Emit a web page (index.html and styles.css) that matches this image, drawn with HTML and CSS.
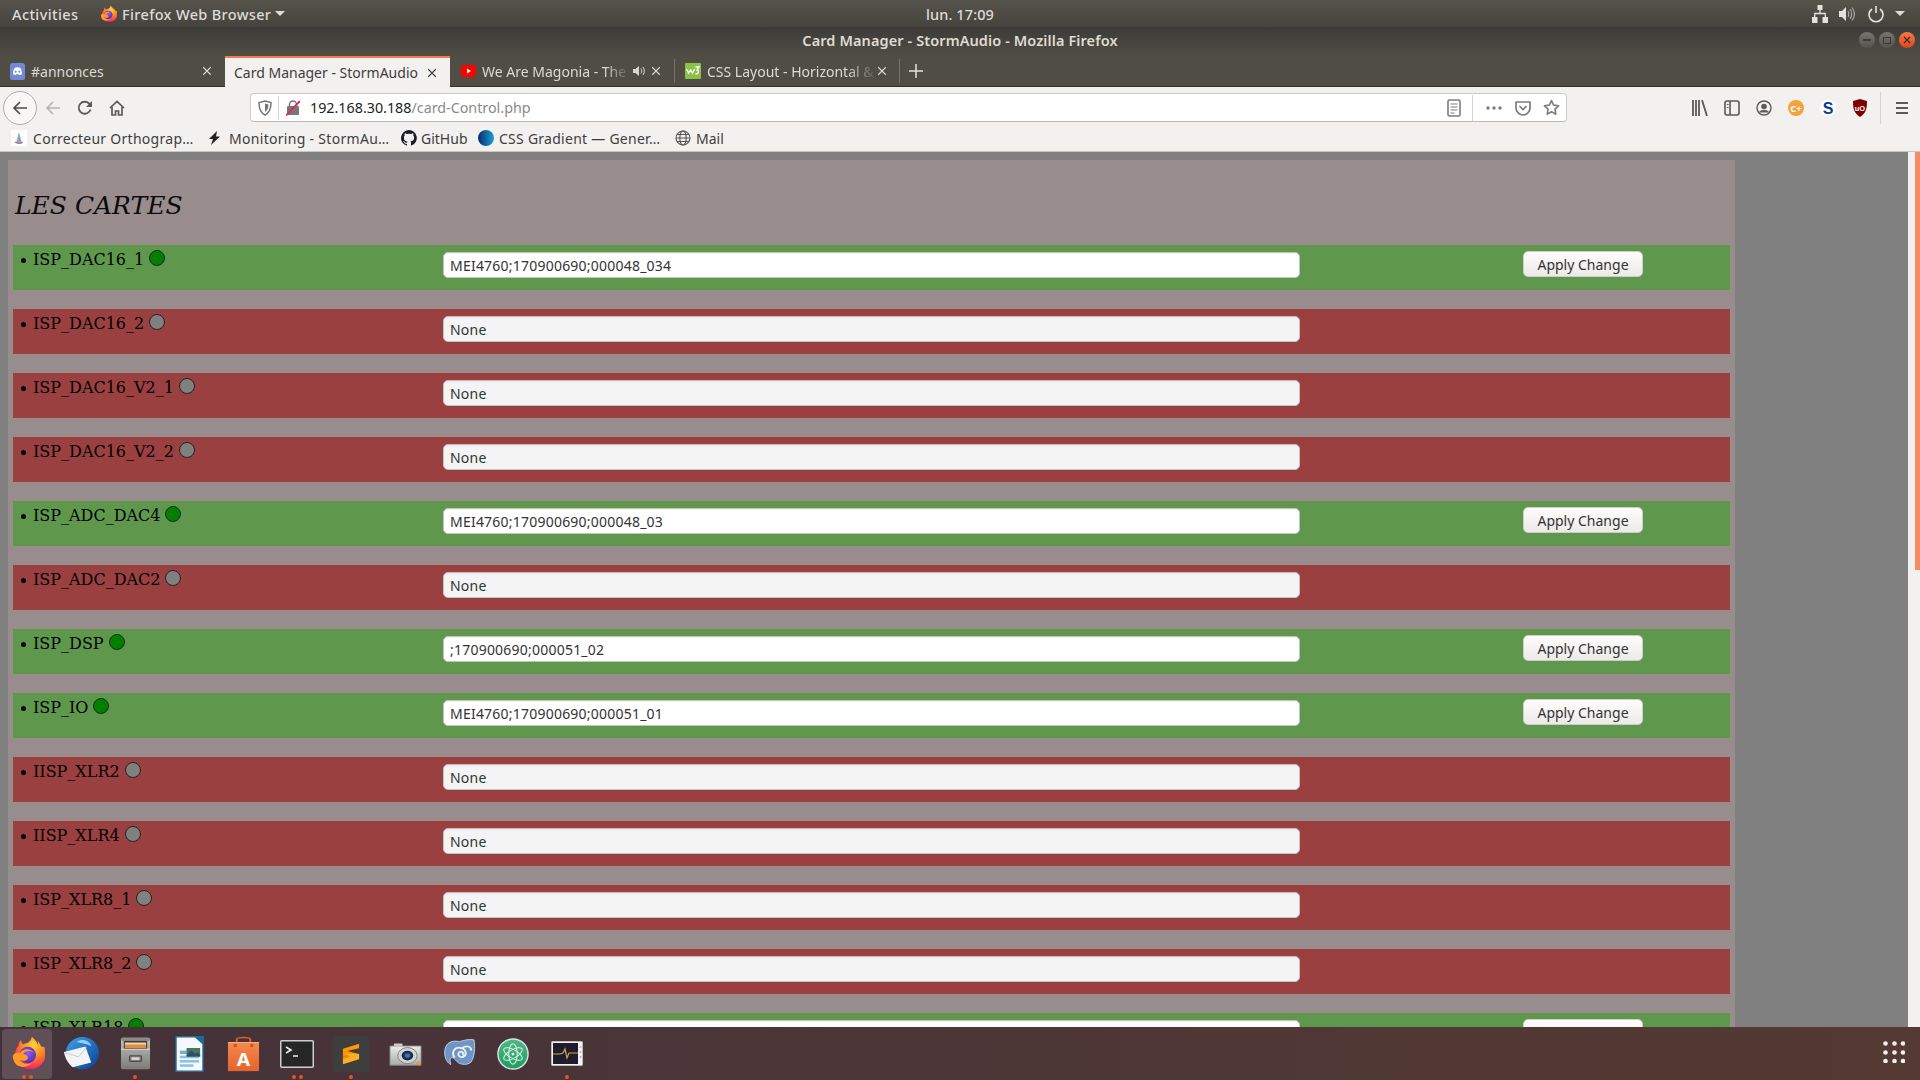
FILE: index.html
```html
<!DOCTYPE html>
<html lang="fr">
<head>
<meta charset="utf-8">
<title>Card Manager - StormAudio</title>
<link rel="stylesheet" href="styles.css">
</head>
<body>
<svg class="defs" width="0" height="0">
  <defs>
    <radialGradient id="ffBody" cx="60%" cy="25%" r="80%"><stop offset="0" stop-color="#ffd43a"/><stop offset=".45" stop-color="#ff8a1f"/><stop offset=".8" stop-color="#ff3a4e"/><stop offset="1" stop-color="#e31587"/></radialGradient>
    <radialGradient id="ffGlobe" cx="50%" cy="40%" r="65%"><stop offset="0" stop-color="#9059ff"/><stop offset="1" stop-color="#4a2ba8"/></radialGradient>
    <linearGradient id="tbWing" x1="0" y1="0" x2="1" y2="1"><stop offset="0" stop-color="#3fa4ee"/><stop offset="1" stop-color="#0a3d91"/></linearGradient>
    <linearGradient id="drawer" x1="0" y1="0" x2="0" y2="1"><stop offset="0" stop-color="#c2c0bb"/><stop offset="1" stop-color="#7e7c78"/></linearGradient>
    <linearGradient id="bag" x1="0" y1="0" x2="0" y2="1"><stop offset="0" stop-color="#f58a4d"/><stop offset="1" stop-color="#e4632c"/></linearGradient>
    <linearGradient id="atomG" x1="0" y1="0" x2="0" y2="1"><stop offset="0" stop-color="#52b788"/><stop offset="1" stop-color="#1f9a62"/></linearGradient>
    <linearGradient id="camG" x1="0" y1="0" x2="0" y2="1"><stop offset="0" stop-color="#ececec"/><stop offset="1" stop-color="#aaa"/></linearGradient>
    <linearGradient id="cssG" x1="0" y1="0" x2="1" y2="0"><stop offset="0" stop-color="#0a2a6b"/><stop offset="1" stop-color="#1aa1d8"/></linearGradient>
    <symbol id="firefox" viewBox="0 0 48 48">
      <path d="M43 15c-1-3-3-6-5-8 1 3 1 5 1 6-2-5-5-8-8-11 0 0-1 0-1 1 0 3-3 5-5 7-3 0-5 1-6 2-1-1-3-3-3-6-2 2-3 4-3 7-3 3-5 8-5 12 0 11 9 20 20 20s21-9 21-21c0-3-1-6-2-9z" fill="url(#ffBody)"/>
      <circle cx="25" cy="26" r="11" fill="url(#ffGlobe)"/>
      <path d="M5 27c2-4 7-5 10-4 2-4 8-6 13-4 5 2 7 7 7 7-2-4-6-6-10-5-3 0-6 2-6 4 4 0 7 3 6 6-2 4-8 3-11 1 3 6 11 8 17 4-4 6-14 8-21 3-3-3-5-7-5-12z" fill="#ff9a2a"/>
    </symbol>
    <symbol id="star" viewBox="0 0 16 16"><path d="M8 1.500l2 4.300 4.700.6-3.500 3.200.9 4.700L8 11.900 3.900 14.300l.9-4.700L1.300 6.400 6 5.800z" fill="none" stroke="currentColor" stroke-width="1.500" stroke-linejoin="round"/></symbol>
    <symbol id="close" viewBox="0 0 12 12"><path d="M1.500 1.500l9 9M10.500 1.500l-9 9" stroke="currentColor" stroke-width="1.300" fill="none"/></symbol>
  </defs>
</svg>

<div class="desktop">
  <header class="topbar">
    <div class="topbar-left">
      <span class="activities">Activities</span>
      <svg class="ff-mini" width="18" height="20"><use href="#firefox"/></svg>
      <span class="appname">Firefox Web Browser</span>
      <span class="caret"></span>
    </div>
    <div class="clock">lun. 17:09</div>
    <div class="tray">
      <svg width="16" height="18" viewBox="0 0 16 18"><path d="M5.500 0h5v5h-5zM0 12h5.500v6H0zM10.500 12H16v6h-5.500z" fill="#e4e2dd"/><path d="M8 5v3.500M2.750 12V8.500h10.500V12" stroke="#e4e2dd" stroke-width="1.300" fill="none"/></svg>
      <svg class="tray-vol" width="16" height="16" viewBox="0 0 16 16"><path d="M0 5h3l4-4v14l-4-4H0z" fill="#e4e2dd"/><path d="M9 5c1 2 1 4 0 6M11 3c2 3 2 7 0 10M13 1.500c3 4 3 9 0 13" stroke="#a8a69f" stroke-width="1.200" fill="none"/></svg>
      <svg class="tray-pow" width="16" height="18" viewBox="0 0 16 18"><path d="M8 1v7" stroke="#e4e2dd" stroke-width="1.600"/><path d="M4 4a7 7 0 1 0 8 0" stroke="#e4e2dd" stroke-width="1.600" fill="none"/></svg>
      <span class="caret"></span>
    </div>
  </header>

  <div class="titlebar">
    <div class="title">Card Manager - StormAudio - Mozilla Firefox</div>
    <div class="winbtns">
      <span class="winbtn"><i class="win-min"></i></span>
      <span class="winbtn"><i class="win-max"></i></span>
      <span class="winbtn winbtn-close"><svg width="8" height="8" viewBox="0 0 8 8"><path d="M1 1l6 6M7 1L1 7" stroke="#4a2012" stroke-width="1.100"/></svg></span>
    </div>
  </div>

  <nav class="tabbar">
    <div class="tab tab-first">
      <svg class="fav" width="15" height="17" viewBox="0 0 15 17"><rect width="15" height="17" rx="2.500" fill="#7289da"/><path d="M3 11c0-3 1-5 1.500-6 1-.5 2-.7 3-.7s2 .2 3 .7c.5 1 1.500 3 1.500 6-1 .8-2 1.200-2.500 1.200l-.7-1H6.200l-.7 1C5 12.200 4 11.800 3 11z" fill="#fff"/><circle cx="5.700" cy="8.800" r="1" fill="#7289da"/><circle cx="9.300" cy="8.800" r="1" fill="#7289da"/></svg>
      <span class="tab-text">#annonces</span>
      <svg class="tab-close" width="10" height="10"><use href="#close"/></svg>
    </div>
    <div class="tab tab-active">
      <span class="tab-text">Card Manager - StormAudio</span>
      <svg class="tab-close" width="10" height="10"><use href="#close"/></svg>
    </div>
    <div class="tab tab-yt">
      <svg class="fav" width="15" height="12" viewBox="0 0 15 12"><rect width="15" height="12" rx="3" fill="#f00"/><path d="M6 3.500l4 2.500-4 2.500z" fill="#fff"/></svg>
      <span class="tab-text tab-fade">We Are Magonia - The Hit</span>
      <svg class="tab-audio" width="14" height="12" viewBox="0 0 14 12"><path d="M0 4h2.500L6 1v10L2.500 8H0z" fill="#d8d6d0"/><path d="M8 3.500c1 1.500 1 3.500 0 5M10 2c1.800 2.500 1.800 5.500 0 8" stroke="#d8d6d0" fill="none"/></svg>
      <svg class="tab-close" width="10" height="10"><use href="#close"/></svg>
    </div>
    <div class="tab tab-w3">
      <svg class="fav" width="16" height="16" viewBox="0 0 16 16"><rect width="16" height="16" rx="1" fill="#8ac249"/><path d="M1.500 6l2 4 2-3 2 3 2-4" stroke="#fff" stroke-width="1.300" fill="none"/><path d="M10.500 4h3.500l-2 3c2 0 2.500 4-1.500 4" stroke="#fff" stroke-width="1.300" fill="none"/></svg>
      <span class="tab-text tab-fade">CSS Layout - Horizontal &amp; Vertical</span>
      <svg class="tab-close" width="10" height="10"><use href="#close"/></svg>
    </div>
    <svg class="tab-plus" width="14" height="14" viewBox="0 0 14 14"><path d="M7 0v14M0 7h14" stroke="#e4e2dd" stroke-width="1.500"/></svg>
  </nav>

  <div class="navbar">
    <div class="nav-left">
      <span class="back-btn"><svg width="16" height="16" viewBox="0 0 16 16"><path d="M15 8H2M8 2L2 8l6 6" fill="none" stroke="#4a4a4a" stroke-width="1.600"/></svg></span>
      <svg class="nav-ico" width="16" height="16" viewBox="0 0 16 16"><path d="M15 8H2M8 2L2 8l6 6" fill="none" stroke="#b4b4b3" stroke-width="1.600"/></svg>
      <svg class="nav-ico" width="16" height="16" viewBox="0 0 16 16"><path d="M13.500 9.500A6 6 0 1 1 12 3.500l2 2" fill="none" stroke="#5a5a5a" stroke-width="1.800"/><path d="M15 1v6H9z" fill="#5a5a5a"/></svg>
      <svg class="nav-ico" width="16" height="16" viewBox="0 0 16 16"><path d="M1 8l7-6.500L15 8M3 7v8h3.500v-4h3v4H13V7" fill="none" stroke="#5a5a5a" stroke-width="1.700"/></svg>
    </div>
    <div class="urlbar">
      <svg class="url-shield" width="14" height="16" viewBox="0 0 14 16"><path d="M7 1l6 1.500c0 6-1 10-6 12.500C2 12.500 1 8.500 1 2.500z" fill="none" stroke="#777" stroke-width="1.500"/><path d="M7 3.500l3.500 1c0 3-.7 6-3.500 7.500z" fill="#777"/></svg>
      <span class="url-sep"></span>
      <svg class="url-lock" width="14" height="16" viewBox="0 0 14 16"><rect x="1" y="6" width="12" height="9" rx="1" fill="#777"/><path d="M3.500 6V4.500a3.500 3.500 0 0 1 7 0V6" fill="none" stroke="#777" stroke-width="1.500"/><path d="M0 15.500L14 1" stroke="#e22850" stroke-width="1.800"/></svg>
      <span class="url-text"><span class="url-host">192.168.30.188</span>/card-Control.php</span>
      <span class="url-actions">
        <svg width="14" height="18" viewBox="0 0 14 18"><rect x="1" y="1" width="12" height="16" rx="1.500" fill="none" stroke="#7c7c7c" stroke-width="1.600"/><path d="M3.500 5h7M3.500 8h7M3.500 11h7M3.500 14h4" stroke="#7c7c7c"/></svg>
        <span class="url-sep url-sep-tall"></span>
        <svg class="ua-dots" width="16" height="4" viewBox="0 0 16 4"><circle cx="2" cy="2" r="1.700" fill="#7c7c7c"/><circle cx="8" cy="2" r="1.700" fill="#7c7c7c"/><circle cx="14" cy="2" r="1.700" fill="#7c7c7c"/></svg>
        <svg class="ua-pocket" width="16" height="16" viewBox="0 0 16 16"><path d="M1 2h14v6a7 7 0 0 1-14 0z" fill="none" stroke="#7c7c7c" stroke-width="1.700" stroke-linejoin="round"/><path d="M4.500 6L8 9.500 11.500 6" fill="none" stroke="#7c7c7c" stroke-width="1.700"/></svg>
        <svg class="ua-star" width="17" height="17" color="#7c7c7c"><use href="#star"/></svg>
      </span>
    </div>
    <div class="toolbar">
      <svg width="16" height="16" viewBox="0 0 16 16"><path d="M1 0v16M4 0v16M7 0v16M10 0l5 16" stroke="#5a5a5a" stroke-width="1.800" fill="none"/></svg>
      <svg width="16" height="16" viewBox="0 0 16 16"><rect x="1" y="1" width="14" height="14" rx="2" fill="none" stroke="#5a5a5a" stroke-width="1.600"/><path d="M6 1v14" stroke="#5a5a5a" stroke-width="1.600"/><path d="M2.800 4.500h1.800M2.800 7.500h1.800" stroke="#5a5a5a"/></svg>
      <svg width="16" height="16" viewBox="0 0 16 16"><circle cx="8" cy="8" r="7" fill="none" stroke="#5a5a5a" stroke-width="1.400"/><circle cx="8" cy="6.500" r="2.800" fill="#5a5a5a"/><path d="M3.200 12.500c1-2.800 8.600-2.800 9.600 0" fill="#5a5a5a" stroke="#5a5a5a"/></svg>
      <svg width="16" height="16" viewBox="0 0 16 16"><circle cx="8" cy="8" r="8" fill="#f2a33c"/><text x="8" y="11.500" class="ext-text" fill="#fff">C+</text></svg>
      <svg width="16" height="16" viewBox="0 0 16 16"><circle cx="8" cy="8" r="8" fill="#fff"/><text x="8" y="13.500" class="ext-s" fill="#0b3e8f">S</text></svg>
      <svg width="16" height="18" viewBox="0 0 16 18"><path d="M8 0l7 2c0 8-1 12-7 16C2 14 1 10 1 2z" fill="#800000"/><text x="8" y="11.500" class="ext-u" fill="#fff">uO</text></svg>
      <span class="tool-sep"></span>
      <svg class="menu-ico" width="14" height="14" viewBox="0 0 14 14"><path d="M1 2h12M1 7h12M1 12h12" stroke="#5a5a5a" stroke-width="1.900"/></svg>
    </div>
  </div>

  <div class="bookmarks">
    <span class="bm bm-1"><svg width="16" height="16" viewBox="0 0 16 16"><rect width="16" height="16" fill="#fff"/><path d="M8 2L5 13h6z" fill="#8aa6c4"/><path d="M4 12c3 2 6 2 8 0" stroke="#d04040" fill="none"/></svg>Correcteur Orthograp…</span>
    <span class="bm bm-2"><svg width="14" height="14" viewBox="0 0 14 14"><path d="M9 0L1 8h4l-2 6 9-8.500H8z" fill="#222"/></svg>Monitoring - StormAu…</span>
    <span class="bm bm-3"><svg width="16" height="16" viewBox="0 0 16 16"><path d="M8 0a8 8 0 0 0-2.500 15.600c.4.100.5-.2.500-.4v-1.400c-2.200.5-2.700-1-2.700-1-.4-.9-.9-1.200-.9-1.200-.7-.5.100-.5.100-.5.800.100 1.200.8 1.200.8.700 1.200 1.900.9 2.300.7.100-.5.300-.9.500-1.100-1.800-.2-3.600-.9-3.600-4 0-.9.300-1.600.8-2.100-.1-.2-.4-1 .1-2.100 0 0 .7-.2 2.200.8a7.600 7.600 0 0 1 4 0c1.500-1 2.200-.8 2.200-.8.400 1.100.2 1.900.1 2.100.5.600.8 1.300.8 2.100 0 3.100-1.900 3.700-3.600 3.900.3.200.5.700.5 1.500v2.200c0 .2.100.5.600.4A8 8 0 0 0 8 0z" fill="#1b1f23"/></svg>GitHub</span>
    <span class="bm bm-4"><svg width="16" height="16" viewBox="0 0 16 16"><circle cx="8" cy="8" r="8" fill="url(#cssG)"/></svg>CSS Gradient — Gener…</span>
    <span class="bm bm-5"><svg width="16" height="16" viewBox="0 0 16 16"><g fill="none" stroke="#555" stroke-width="1.100"><circle cx="8" cy="8" r="7"/><ellipse cx="8" cy="8" rx="3.200" ry="7"/><path d="M1 8h14M2 4.500h12M2 11.500h12"/></g></svg>Mail</span>
  </div>

  <div class="viewport">
    <main class="page">
      <section class="panel">
        <h1 class="panel-title">LES CARTES</h1>
        <ul class="cards">
          <li class="card card-ok"><div class="card-label"><span class="bullet"></span>ISP_DAC16_1<span class="led led-on"></span></div><input class="card-input" value="MEI4760;170900690;000048_034"><button class="apply">Apply Change</button></li>
          <li class="card card-ko"><div class="card-label"><span class="bullet"></span>ISP_DAC16_2<span class="led"></span></div><input class="card-input" value="None"></li>
          <li class="card card-ko"><div class="card-label"><span class="bullet"></span>ISP_DAC16_V2_1<span class="led"></span></div><input class="card-input" value="None"></li>
          <li class="card card-ko"><div class="card-label"><span class="bullet"></span>ISP_DAC16_V2_2<span class="led"></span></div><input class="card-input" value="None"></li>
          <li class="card card-ok"><div class="card-label"><span class="bullet"></span>ISP_ADC_DAC4<span class="led led-on"></span></div><input class="card-input" value="MEI4760;170900690;000048_03"><button class="apply">Apply Change</button></li>
          <li class="card card-ko"><div class="card-label"><span class="bullet"></span>ISP_ADC_DAC2<span class="led"></span></div><input class="card-input" value="None"></li>
          <li class="card card-ok"><div class="card-label"><span class="bullet"></span>ISP_DSP<span class="led led-on"></span></div><input class="card-input" value=";170900690;000051_02"><button class="apply">Apply Change</button></li>
          <li class="card card-ok"><div class="card-label"><span class="bullet"></span>ISP_IO<span class="led led-on"></span></div><input class="card-input" value="MEI4760;170900690;000051_01"><button class="apply">Apply Change</button></li>
          <li class="card card-ko"><div class="card-label"><span class="bullet"></span>IISP_XLR2<span class="led"></span></div><input class="card-input" value="None"></li>
          <li class="card card-ko"><div class="card-label"><span class="bullet"></span>IISP_XLR4<span class="led"></span></div><input class="card-input" value="None"></li>
          <li class="card card-ko"><div class="card-label"><span class="bullet"></span>ISP_XLR8_1<span class="led"></span></div><input class="card-input" value="None"></li>
          <li class="card card-ko"><div class="card-label"><span class="bullet"></span>ISP_XLR8_2<span class="led"></span></div><input class="card-input" value="None"></li>
          <li class="card card-ok"><div class="card-label"><span class="bullet"></span>ISP_XLR18<span class="led led-on"></span></div><input class="card-input" value=""><button class="apply">Apply Change</button></li>
        </ul>
      </section>
    </main>
    <div class="scrollbar"><div class="scroll-thumb"></div></div>
  </div>

  <footer class="dock">
    <div class="dock-apps">
      <div class="dock-item dock-active">
        <svg width="36" height="37"><use href="#firefox"/></svg>
        <div class="pips"><i></i><i></i></div>
      </div>
      <div class="dock-item">
        <svg width="37" height="36" viewBox="0 0 38 38" preserveAspectRatio="none"><circle cx="20" cy="18" r="17" fill="url(#tbWing)"/><path d="M14 6c6-4 14-1 15 5-4-3-10-3-15-5z" fill="#8cd0f7"/><path d="M1 17l22-6 6 17-19 5C6 30 2 24 1 17z" fill="#f4f4f4"/><path d="M3 18l13 4 8-10" fill="none" stroke="#c2c8d2"/></svg>
        <div class="pips"></div>
      </div>
      <div class="dock-item">
        <svg width="31" height="33" viewBox="0 0 32 42" preserveAspectRatio="none"><rect x="1" y="1" width="30" height="40" rx="2" fill="url(#drawer)"/><rect x="1" y="1" width="30" height="4" rx="2" fill="#8c8a86"/><rect x="4" y="5" width="24" height="10" fill="#3d3a36"/><rect x="5" y="7" width="22" height="3" fill="#f5d3a9"/><rect x="5" y="10" width="22" height="4" fill="#e98a3c"/><rect x="1" y="15" width="30" height="1" fill="#eee"/><rect x="10" y="24" width="12" height="7" rx="1" fill="none" stroke="#4c4c4a" stroke-width="1.500"/><rect x="12" y="26" width="8" height="3" fill="#ddd"/></svg>
        <div class="pips pips-one"><i></i></div>
      </div>
      <div class="dock-item">
        <svg width="29" height="36" viewBox="0 0 30 42" preserveAspectRatio="none"><path d="M1 1h20l8 8v32H1z" fill="#f6f8fb" stroke="#1b6a9c" stroke-width="1.500"/><path d="M20 0h10v10z" fill="#1b6a9c"/><rect x="5" y="17" width="14" height="4" fill="#6fb2dc"/><rect x="5" y="23" width="20" height="3" fill="#8cc2e2"/><rect x="5" y="28" width="20" height="3" fill="#8cc2e2"/><rect x="5" y="33" width="14" height="3" fill="#8cc2e2"/><rect x="12" y="14" width="14" height="10" fill="#47785e"/><path d="M12 22l5-5 4 4 2-2 3 3v2H12z" fill="#2f4e6d"/></svg>
        <div class="pips"></div>
      </div>
      <div class="dock-item">
        <svg width="33" height="36" viewBox="0 0 34 42" preserveAspectRatio="none"><path d="M10 8V4c0-3 14-3 14 0v4" fill="none" stroke="#d8622b" stroke-width="2"/><rect x="1" y="7" width="32" height="34" fill="url(#bag)"/><rect x="1" y="7" width="32" height="1" fill="#fbb088"/><rect x="7" y="9" width="3" height="4" rx="1" fill="#c85222"/><rect x="24" y="9" width="3" height="4" rx="1" fill="#c85222"/><text x="17" y="35" class="dock-a" fill="#fff">A</text></svg>
        <div class="pips"></div>
      </div>
      <div class="dock-item">
        <svg width="34" height="28" viewBox="0 0 34 28"><rect x=".75" y=".75" width="32.500" height="26.500" rx="1" fill="#262626" stroke="#cfcfcf" stroke-width="1.500"/><path d="M6 7l5 3-5 3" fill="none" stroke="#eee" stroke-width="1.600"/><path d="M13 16h5" stroke="#eee" stroke-width="1.500"/></svg>
        <div class="pips pips-two"><i></i><i></i></div>
      </div>
      <div class="dock-item">
        <span class="sublime-tile"><svg width="18" height="22" viewBox="0 0 24 30"><path d="M23 1L1 8v7l22 7v-7L7 11l16-4z" fill="#ff9800"/><path d="M1 15v14l22-7v-7z" fill="#ffb020"/><path d="M1 15l10 3L1 22z" fill="#e8890a"/></svg></span>
        <div class="pips pips-one"><i></i></div>
      </div>
      <div class="dock-item">
        <svg width="33" height="24" viewBox="0 0 34 30" preserveAspectRatio="none"><path d="M1 5h32v24H1z" fill="url(#camG)" stroke="#888"/><rect x="5" y="2" width="9" height="3" rx="1" fill="#ccc"/><circle cx="19" cy="17" r="10" fill="#d4d4d4" stroke="#777"/><circle cx="19" cy="17" r="6" fill="#1d2c4c"/><circle cx="19" cy="17" r="3" fill="#3d6bb5"/><rect x="28" y="25" width="4" height="3" fill="#e89a2a"/></svg>
        <div class="pips"></div>
      </div>
      <div class="dock-item">
        <svg width="33" height="30" viewBox="0 0 34 34" preserveAspectRatio="none"><path d="M2 12C3 4 10 1 17 3c5-2 11-3 15-2 1 8 1 18-3 25-4 4-10 3-13 1-3-2-4-6-7-6-3 2-1 5-1 8-5-3-7-10-6-17z" fill="#6f95c5" stroke="#c0d4ea"/><path d="M12 21c-4-6 0-12 6-11s7 8 3 10-7-3-4-5 5 2 3 3" fill="none" stroke="#eaf1f9" stroke-width="2"/><path d="M20 10c4-3 9-2 9 3" fill="none" stroke="#eaf1f9" stroke-width="2"/></svg>
        <div class="pips"></div>
      </div>
      <div class="dock-item">
        <svg width="32" height="32" viewBox="0 0 34 34"><circle cx="17" cy="17" r="16" fill="url(#atomG)" stroke="#d8e8df" stroke-width="1.500"/><g fill="none" stroke="#d8f2e3" stroke-width="1.100"><ellipse cx="17" cy="17" rx="11" ry="4.500" transform="rotate(30 17 17)"/><ellipse cx="17" cy="17" rx="11" ry="4.500" transform="rotate(-30 17 17)"/><ellipse cx="17" cy="17" rx="11" ry="4.500" transform="rotate(90 17 17)"/></g><circle cx="17" cy="17" r="1.600" fill="#d8f2e3"/></svg>
        <div class="pips"></div>
      </div>
      <div class="dock-item">
        <svg width="32" height="25" viewBox="0 0 32 25"><rect x=".5" y=".5" width="31" height="24" rx="1" fill="#f2f2f0" stroke="#bbb"/><rect x="2" y="2" width="25" height="21" fill="#1f1d2b"/><path d="M2 13h7l3-1 2-4 2 9 2-5h9" fill="none" stroke="#c7a84c" stroke-width="1.200"/><g fill="#b5b5b3"><circle cx="29.500" cy="6" r="1"/><circle cx="29.500" cy="11" r="1"/><circle cx="29.500" cy="16" r="1"/></g></svg>
        <div class="pips pips-one"><i></i></div>
      </div>
    </div>
    <svg class="show-apps" width="22" height="22" viewBox="0 0 22 22"><g fill="#f2f0f0"><circle cx="2.500" cy="2.500" r="2.300"/><circle cx="11.500" cy="2.500" r="2.300"/><circle cx="20" cy="2.500" r="2.300"/><circle cx="2.500" cy="11.500" r="2.300"/><circle cx="11.500" cy="11.500" r="2.300"/><circle cx="20" cy="11.500" r="2.300"/><circle cx="2.500" cy="20" r="2.300"/><circle cx="11.500" cy="20" r="2.300"/><circle cx="20" cy="20" r="2.300"/></g></svg>
  </footer>
</div>
</body>
</html>
```
FILE: styles.css
```css
* { box-sizing: border-box; }
html, body { margin: 0; padding: 0; height: 100%; overflow: hidden; }
body { font-family: "Noto Sans", "Liberation Sans", sans-serif; }
.defs { position: absolute; }
.desktop { display: flex; flex-direction: column; width: 1920px; height: 1080px; }

/* GNOME top bar */
.topbar { height: 27px; flex: none; display: grid; grid-template-columns: 1fr auto 1fr; align-items: center; background: linear-gradient(#57544c, #44433d); color: #dedcd6; font-size: 14.500px; }
.topbar-left { display: flex; align-items: center; padding-left: 12px; }
.activities { width: 87px; letter-spacing: .4px; font-weight: 500; }
.ff-mini { margin-right: 5px; }
.appname { font-weight: 500; letter-spacing: .35px; width: 153px; white-space: nowrap; }
.caret { display: inline-block; width: 0; height: 0; border: 5px solid transparent; border-top: 5px solid #dedcd6; border-bottom: 0; }
.clock { font-weight: 500; letter-spacing: .1px; }
.tray { display: flex; align-items: center; justify-content: flex-end; padding-right: 15px; }
.tray-vol { margin-left: 11px; }
.tray-pow { margin-left: 13px; }
.tray .caret { margin-left: 11px; }

/* window title */
.titlebar { height: 29px; flex: none; position: relative; display: flex; align-items: center; justify-content: center; padding-bottom: 3px; background: linear-gradient(#3c3b37, #504d45); color: #dfdbd2; font-size: 14.500px; font-weight: 600; letter-spacing: .1px; }
.winbtns { position: absolute; right: 5px; top: 5px; display: flex; gap: 4px; }
.winbtn { width: 16px; height: 16px; border-radius: 50%; background: linear-gradient(#77756f, #55534d); display: flex; align-items: center; justify-content: center; }
.winbtn-close { background: linear-gradient(#f37a4a, #d9481a); }
.win-min { width: 8px; height: 1.500px; background: #3c3b37; }
.win-max { width: 8px; height: 7px; border: 1.500px solid #3c3b37; }

/* tab strip */
.tabbar { height: 31px; flex: none; display: flex; background: #504d45; border-bottom: 1px solid #2e2d29; color: #dcdad5; font-size: 14px; align-items: stretch; }
.tab { position: relative; display: flex; align-items: center; white-space: nowrap; }
.tab-first { width: 225px; padding-left: 10px; }
.tab-first .tab-text { margin-left: 6px; }
.tab-first .tab-close { margin-left: auto; margin-right: 13px; }
.tab-active { width: 225px; padding-left: 9px; background: #f3f1ef; color: #3d3d3b; border-top: 2px solid #f27a4f; margin-bottom: -1px; }
.tab-active .tab-close { margin-left: auto; margin-right: 13px; }
.tab-yt { width: 225px; padding-left: 11px; border-right: 1px solid #75726a; margin: 3px 0; }
.tab-yt .tab-text { margin-left: 6px; width: 149px; overflow: hidden; }
.tab-yt .tab-audio { margin-left: 2px; }
.tab-yt .tab-close { margin-left: 4px; }
.tab-w3 { width: 225px; padding-left: 10px; border-right: 1px solid #75726a; margin: 3px 0; }
.tab-w3 .tab-text { margin-left: 6px; width: 170px; overflow: hidden; }
.tab-w3 .tab-close { margin-left: 0; }
.tab-fade { -webkit-mask-image: linear-gradient(90deg, #000 82%, transparent 100%); mask-image: linear-gradient(90deg, #000 82%, transparent 100%); }
.tab-plus { align-self: center; margin-left: 9px; }

/* navigation toolbar */
.navbar { height: 38px; flex: none; display: flex; align-items: center; padding-top: 3px; background: #f3f1ef; }
.nav-left { width: 250px; display: flex; align-items: center; padding-left: 3px; }
.back-btn { width: 34px; height: 34px; flex: none; border: 1px solid #b0aeab; border-radius: 50%; background: #f8f7f6; display: flex; align-items: center; justify-content: center; margin-right: 8px; }
.nav-ico { margin-right: 16px; }
.urlbar { width: 1317px; height: 29px; flex: none; display: flex; align-items: center; background: #fff; border: 1px solid #cdcbc8; border-bottom-color: #bdbbb8; border-radius: 4px; padding: 0 6px 0 7px; font-size: 14.300px; color: #8a8a88; }
.url-shield { flex: none; }
.url-sep { width: 1px; height: 24px; background: #d6d4d1; margin: 0 7px 0 6px; flex: none; }
.url-lock { flex: none; }
.url-text { margin-left: 10px; white-space: nowrap; }
.url-host { color: #222; }
.url-actions { margin-left: auto; display: flex; align-items: center; }
.url-sep-tall { height: 26px; margin: 0 0 0 11px; }
.ua-dots { margin-left: 13px; }
.ua-pocket { margin-left: 13px; }
.ua-star { margin-left: 12px; }
.toolbar { flex: 1; display: flex; align-items: center; padding-left: 125px; gap: 16px; }
.tool-sep { width: 1px; height: 32px; background: #d6d4d1; margin-left: -4px; }
.menu-ico { margin-left: -2px; }
.ext-text { font: 700 9.500px "Noto Sans", sans-serif; text-anchor: middle; }
.ext-s { font: 700 16px "Liberation Sans", sans-serif; text-anchor: middle; }
.ext-u { font: 700 7.500px "Liberation Sans", sans-serif; text-anchor: middle; }
.dock-a { font: 700 20px "Noto Sans", sans-serif; text-anchor: middle; }

/* bookmarks */
.bookmarks { height: 27px; flex: none; display: flex; align-items: center; background: #f3f1ef; border-bottom: 1px solid #c8c6c3; color: #3e3e3c; font-size: 14px; white-space: nowrap; }
.bm { display: flex; align-items: center; }
.bm svg { flex: none; }
.bm-1 { margin-left: 11px; gap: 6px; width: 195px; letter-spacing: .28px; }
.bm-2 { gap: 7px; width: 194px; margin-left: 2px; letter-spacing: .3px; }
.bm-3 { gap: 4px; width: 71px; margin-left: -1px; }
.bm-4 { gap: 5px; width: 196px; margin-left: 6px; letter-spacing: .26px; }
.bm-5 { gap: 5px; margin-left: 1px; }

/* scrolled page */
.viewport { flex: 1; min-height: 0; display: flex; background: #808080; overflow: hidden; }
.page { flex: 1; min-width: 0; padding: 8px 0 0 8px; overflow: hidden; font-family: "DejaVu Serif", serif; color: #000; }
.panel { width: 1727px; background: #988d8c; padding: 0 5px; min-height: 100%; }
.panel-title { margin: 0; padding: 32px 0 25px 2px; font-size: 25px; line-height: 28px; font-weight: 400; font-style: italic; color: #0c0c0c; }
.cards { list-style: none; margin: 0; padding: 0; }
.card { height: 45px; margin-bottom: 19px; display: grid; grid-template-columns: 430px 857px 223px 119px; align-items: start; }
.card-ok { background: #5f984d; }
.card-ko { background: #9a4040; }
.card-label { display: flex; align-items: center; padding: 5px 0 0 8px; font-size: 16px; line-height: 19px; }
.bullet { width: 5px; height: 5px; border-radius: 50%; background: #000; margin-right: 7px; margin-top: 2px; }
.led { width: 16px; height: 16px; border: 1px solid #222; border-radius: 50%; background: #808080; margin-left: 5px; margin-top: -4px; }
.led-on { background: #008000; }
.card-input { grid-column: 2; margin-top: 7px; height: 26px; width: 857px; padding: 0 6px; border: 1px solid #c4c4c4; border-radius: 5px; background: #f4f4f4; font: 14px "Noto Sans", sans-serif; letter-spacing: .22px; color: #333; box-shadow: inset 0 1px 1px rgba(0,0,0,.06); outline: 0; }
.card-ok .card-input { background: #fff; }
.apply { grid-column: 4; margin-top: 6px; height: 26px; width: 120px; padding: 0; border: 1px solid #cfcdca; border-radius: 5px; background: linear-gradient(#fdfdfc, #eceae8); font: 14px "Noto Sans", sans-serif; color: #333; }
.scrollbar { width: 12px; flex: none; background: #f3f1ef; display: flex; justify-content: flex-end; }
.scroll-thumb { width: 5px; height: 418px; background: #f68c64; }

/* dock */
.dock { height: 53px; flex: none; position: relative; display: flex; align-items: center; background: linear-gradient(90deg, #44323a, #553a33); }
.dock-apps { display: flex; height: 100%; }
.dock-item { position: relative; width: 54px; height: 100%; display: flex; align-items: center; justify-content: center; }
.dock-active::before { content: ""; position: absolute; left: 2px; right: 2px; top: 2px; bottom: 1px; border-radius: 4px; background: #6b5a62; opacity: .75; }
.dock-item svg, .sublime-tile { position: relative; }
.sublime-tile { width: 36px; height: 36px; background: #3e3e3e; border-radius: 2px; display: flex; align-items: center; justify-content: center; }
.pips { position: absolute; bottom: 1px; left: 0; right: 0; display: flex; justify-content: center; gap: 3px; }
.pips i { width: 4px; height: 4px; border-radius: 50%; background: #e95420; }
.show-apps { position: absolute; left: 1883px; top: 14px; }
```
